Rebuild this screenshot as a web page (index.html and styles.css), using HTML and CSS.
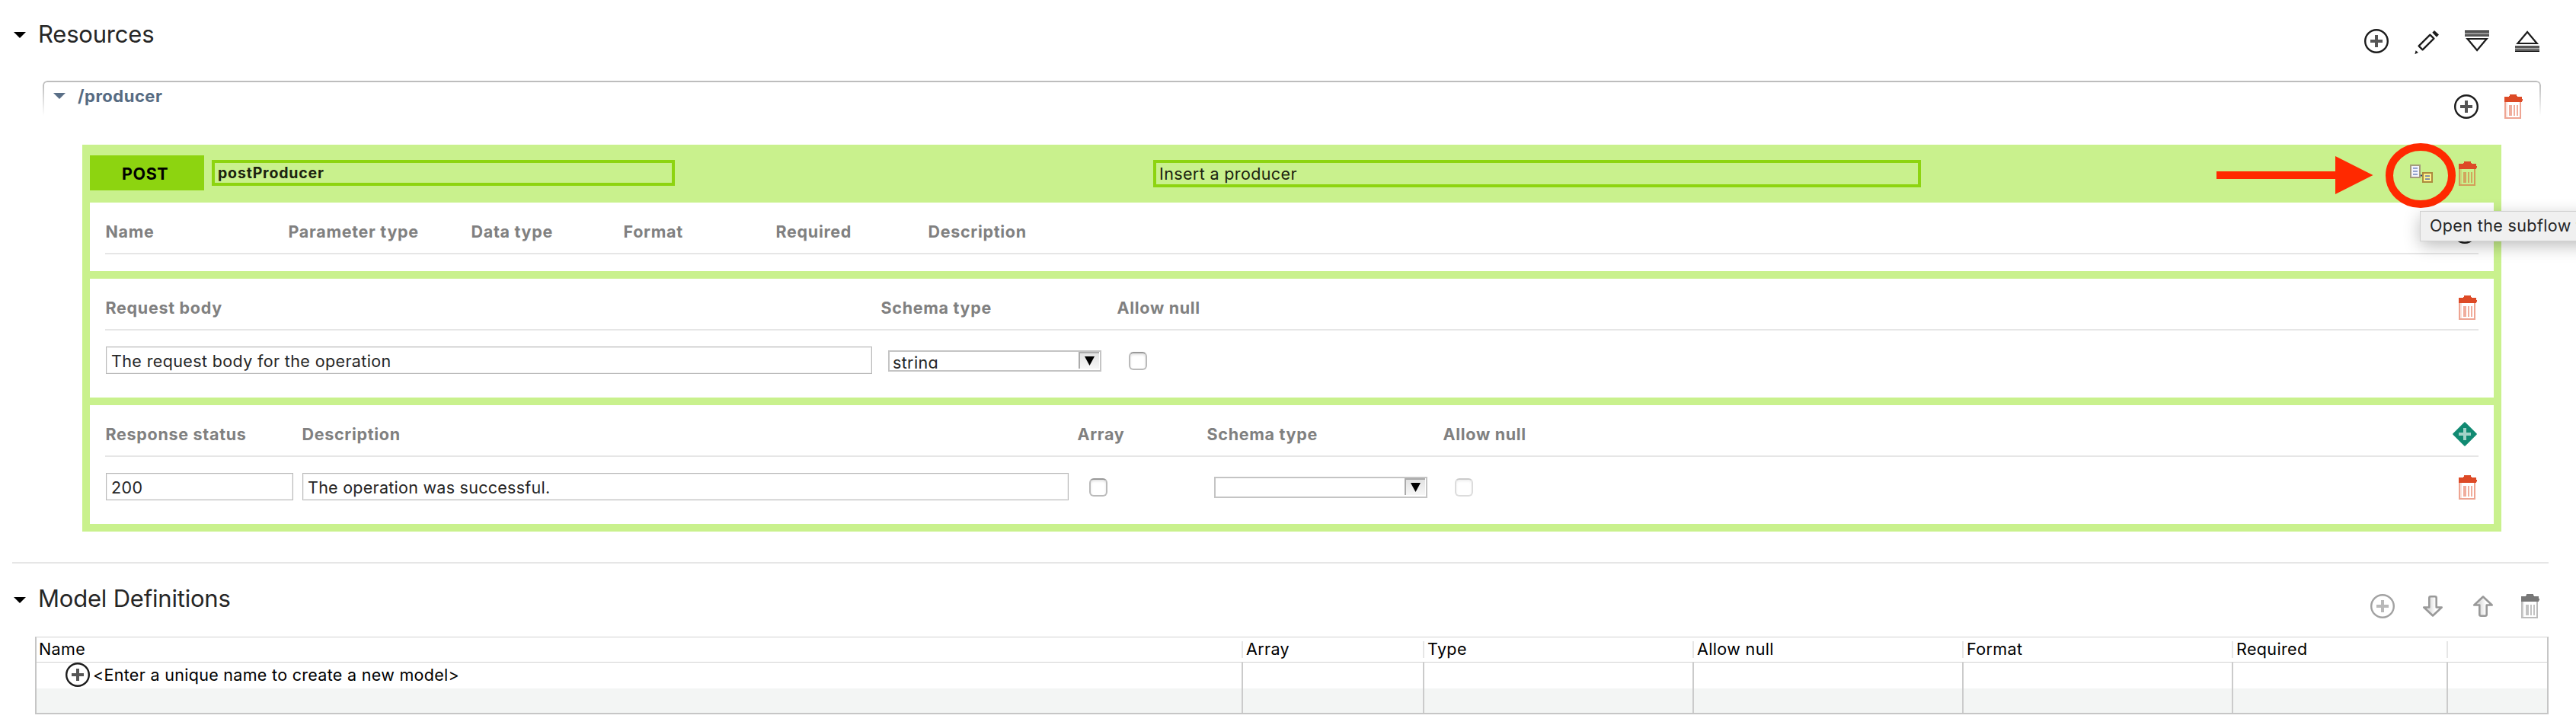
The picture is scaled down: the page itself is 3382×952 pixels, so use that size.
FILE: index.html
```
<!DOCTYPE html>
<html lang="en">
<head>
<meta charset="utf-8">
<title>REST API editor</title>
<link rel="stylesheet" href="styles.css">
</head>
<body>
<svg class="sprite" width="0" height="0" aria-hidden="true">
  <linearGradient id="arrow-fill" x1="0" x2="1"><stop offset="0.35" stop-color="#e2e2e2"/><stop offset="0.65" stop-color="#fff"/></linearGradient>
  <symbol id="i-add" viewBox="0 0 32 32">
    <circle cx="16" cy="16" r="14.8" fill="none" stroke="currentColor" stroke-width="2.4"/>
    <path d="M8 14h6V8h4v6h6v4h-6v6h-4v-6H8z" fill="currentColor" opacity=".75"/>
  </symbol>
  <symbol id="i-pencil" viewBox="0 0 32 32">
    <path d="M5.600 21.400 20.400 6.600l5 5L10.600 26.400z" fill="#fff" stroke="currentColor" stroke-width="2.300" stroke-linejoin="round"/>
    <path d="M23.300 3.800 26 1l6 5.600-3 3.200z M1.600 27.200 5 30 .4 32.200z" fill="currentColor"/>
  </symbol>
  <symbol id="i-expand" viewBox="0 0 32 28">
    <path d="M0 0h32v1.600H0z" fill="#000"/><path d="M0 1.600h32V8H0z" fill="#555"/><path d="M0 3.400h32v1.600H0z" fill="#aaa"/>
    <path d="M3.500 11h25.200L16.100 26z" fill="#fff" stroke="#1c1c1c" stroke-width="2.200"/>
  </symbol>
  <symbol id="i-trash" viewBox="0 0 24 32">
    <path d="M7 0h9v2h1v1h6v3h1v2.500h-1V10H0V3h6V2h1z" fill="currentColor"/>
    <path d="M1 10v21h20V10" fill="none" stroke="currentColor" stroke-width="2" opacity=".5"/>
    <path d="M2 10h2v20H2z" fill="currentColor" opacity=".16"/>
    <path d="M6 14h4v14H6zM12 14h2v14h-2zM16 14h2v14h-2z" fill="currentColor" opacity=".45"/>
  </symbol>
  <symbol id="i-arrow" viewBox="0 0 28 28">
    <path d="M9.300 15.500V3.300q0-2 2-2h5.400q2 0 2 2v12.200h7L14 26.500 2.300 15.500z" fill="url(#arrow-fill)" stroke="#999" stroke-width="2.600" stroke-linejoin="round"/>
  </symbol>
  <symbol id="i-diamond" viewBox="0 0 32 32">
    <path d="M16 1.200 30.800 16 16 30.800 1.200 16z" fill="#118a72" stroke="#118a72" stroke-width="2" stroke-linejoin="round"/>
    <path d="M8 14h6V8h4v6h6v4h-6v6h-4v-6H8z" fill="#a3d2c8"/>
  </symbol>
  <symbol id="i-subflow" viewBox="0 0 30 24">
    <path d="M14 13.500h3v2h-3z" fill="#38466b"/>
    <path d="M1 1h12v16H1z" fill="#f4f4fb" stroke="#a49b7c" stroke-width="2"/>
    <path d="M4 4h6v1.800H4zM4 8h6v1.800H4zM4 12h6v1.800H4z" fill="#8193c6"/>
    <path d="M17 11h12v12H17z" fill="#fbf28c" stroke="#ad8a3e" stroke-width="2"/>
    <path d="M20 14.200h6V16h-6zM20 18.200h6V20h-6z" fill="#6f80a8"/>
  </symbol>
</svg>

<section class="resources">
  <header class="section-head">
    <i class="twistie"></i>
    <h2>Resources</h2>
    <div class="toolbar">
      <svg class="ic"><use href="#i-add"/></svg>
      <svg class="ic pencil"><use href="#i-pencil"/></svg>
      <svg class="ic bars"><use href="#i-expand"/></svg>
      <svg class="ic bars flip"><use href="#i-expand"/></svg>
    </div>
  </header>

  <header class="path-head">
    <i class="twistie slate"></i>
    <h3>/producer</h3>
    <div class="path-tools">
      <svg class="ic"><use href="#i-add"/></svg>
      <svg class="trash"><use href="#i-trash"/></svg>
    </div>
  </header>

  <article class="operation">
    <header class="op-head">
      <span class="verb">POST</span>
      <div class="op-field op-name">postProducer</div>
      <div class="op-field op-summary">Insert a producer</div>
      <svg class="subflow"><use href="#i-subflow"/></svg>
      <svg class="trash"><use href="#i-trash"/></svg>
    </header>

    <section class="block params">
      <div class="labels">
        <span>Name</span><span>Parameter type</span><span>Data type</span><span>Format</span><span>Required</span><span>Description</span>
        <svg class="ic"><use href="#i-add"/></svg>
      </div>
    </section>

    <section class="block request">
      <div class="labels">
        <span>Request body</span><span>Schema type</span><span>Allow null</span>
        <svg class="trash"><use href="#i-trash"/></svg>
      </div>
      <div class="fields">
        <div class="input wide">The request body for the operation</div>
        <div class="select req-type"><span class="value">string</span><span class="drop"></span></div>
        <span class="check"></span>
      </div>
    </section>

    <section class="block response">
      <div class="labels">
        <span>Response status</span><span>Description</span><span>Array</span><span>Schema type</span><span>Allow null</span>
        <svg class="ic"><use href="#i-diamond"/></svg>
      </div>
      <div class="fields">
        <div class="input status">200</div>
        <div class="input wide message">The operation was successful.</div>
        <span class="check array"></span>
        <div class="select res-type"><span class="value"></span><span class="drop"></span></div>
        <span class="check disabled"></span>
        <svg class="trash"><use href="#i-trash"/></svg>
      </div>
    </section>
  </article>
</section>

<section class="models">
  <header class="section-head">
    <i class="twistie"></i>
    <h2>Model Definitions</h2>
    <div class="toolbar">
      <svg class="ic"><use href="#i-add"/></svg>
      <svg class="arrow"><use href="#i-arrow"/></svg>
      <svg class="arrow flip"><use href="#i-arrow"/></svg>
      <svg class="trash"><use href="#i-trash"/></svg>
    </div>
  </header>
  <div class="table">
    <div class="row head"><span>Name</span><span>Array</span><span>Type</span><span>Allow null</span><span>Format</span><span>Required</span><span></span></div>
    <div class="row new"><span class="entry"><svg class="ic"><use href="#i-add"/></svg>&lt;Enter a unique name to create a new model&gt;</span><span></span><span></span><span></span><span></span><span></span><span></span></div>
    <div class="row alt"><span></span><span></span><span></span><span></span><span></span><span></span><span></span></div>
  </div>
</section>

<svg class="callout" viewBox="0 0 320 90">
  <path d="M0 39h156V19l49.500 25L156 69V49H0z" fill="#ff2900"/>
  <ellipse cx="268" cy="44.500" rx="41" ry="37.500" fill="none" stroke="#ff2900" stroke-width="10"/>
</svg>
<div class="tooltip">Open the subflow f</div>
</body>
</html>
```

FILE: styles.css
```
* { box-sizing: border-box; }

body {
  margin: 0;
  width: 3382px;
  height: 952px;
  position: relative;
  overflow: hidden;
  background: #fff;
  color: #262626;
  font: 400 21.5px/30px Inter, "Liberation Sans", sans-serif;
  letter-spacing: 0.37px;
  white-space: nowrap;
}

h2, h3 { margin: 0; }
svg { display: block; flex: none; overflow: visible; }
.sprite { position: absolute; }

.ic { width: 32px; height: 32px; color: #1c1c1c; }
.trash { width: 24px; height: 32px; color: #dd4a26; }
.flip { transform: scaleY(-1); }

.twistie {
  width: 16px;
  height: 8px;
  background: #000;
  clip-path: polygon(0 0, 100% 0, 50% 100%);
}
.twistie.slate { background: #5a6f87; }

/* Section headings */
.section-head { display: flex; align-items: flex-start; padding-left: 18px; }
.section-head h2 {
  margin-left: 16px;
  font-size: 31px;
  font-weight: 400;
  line-height: 40px;
  letter-spacing: -0.2px;
}
.toolbar { display: flex; margin-left: auto; }

.resources .section-head { height: 106px; padding-top: 25px; }
.resources .section-head .twistie { margin-top: 17px; }
.resources .toolbar { gap: 34px; padding: 13px 48px 0 0; }
.pencil { margin-top: 1px; }
.bars { height: 28px; margin-top: 2px; }

/* Resource path */
.path-head {
  position: relative;
  display: flex;
  align-items: flex-start;
  height: 84px;
  margin: 0 46px 0 56px;
}
.path-head::before {
  content: "";
  position: absolute;
  inset: 0 0 auto 0;
  height: 44px;
  border: 2px solid #bdbdbd;
  border-bottom: 0;
  border-radius: 6px 6px 0 0;
  -webkit-mask-image: linear-gradient(#000 10%, transparent);
  mask-image: linear-gradient(#000 10%, transparent);
}
.path-head .twistie { margin: 16px 0 0 14px; }
.path-head h3 {
  margin: 5px 0 0 16px;
  color: #566b82;
  font-size: 22px;
  font-weight: 700;
  letter-spacing: 0.5px;
}
.path-tools { display: flex; gap: 34px; margin: 18px 24px 0 auto; }

/* Operation panel */
.operation {
  width: 3176px;
  height: 508px;
  margin-left: 108px;
  padding: 0 10px 10px;
  background: #c9f18d;
}
.op-head { display: flex; align-items: flex-start; height: 76px; padding-top: 14px; }
.verb {
  width: 150px;
  height: 46px;
  padding-left: 42px;
  background: #8dd410;
  color: #000;
  font-weight: 700;
  line-height: 48px;
  letter-spacing: 0.6px;
}
.op-field { margin-top: 6px; padding-left: 4px; border: 4px solid #8dd410; color: #1c230f; }
.op-name {
  width: 608px;
  height: 34px;
  margin-left: 10px;
  font-size: 19.5px;
  font-weight: 700;
  line-height: 26px;
  letter-spacing: 0.82px;
}
.op-summary { width: 1008px; height: 36px; margin-left: 628px; line-height: 28px; }
.subflow { width: 30px; height: 24px; margin: 12px 0 0 642px; }
.op-head .trash { margin: 8px 0 0 34px; }

.block { padding: 0 20px; background: #fff; }
.params { height: 90px; }
.request, .response { height: 156px; margin-top: 10px; }

.labels {
  display: flex;
  height: 68px;
  padding-top: 23px;
  border-bottom: 2px solid #e6e6e6;
  color: #808080;
  font-weight: 700;
  letter-spacing: 0.7px;
}
.labels span { flex: none; text-indent: 0.5px; }
.labels svg { margin: -1px 2px 0 auto; }

.params span { width: 240px; }
.params span:nth-child(3), .params span:nth-child(4), .params span:nth-child(5) { width: 200px; }
.request .labels span:nth-child(1) { width: 1018px; }
.request .labels span:nth-child(2) { width: 310px; }
.response .labels span:nth-child(1) { width: 258px; }
.response .labels span:nth-child(2) { width: 1018px; }
.response .labels span:nth-child(3) { width: 170px; }
.response .labels span:nth-child(4) { width: 310px; }

.fields { display: flex; align-items: flex-start; padding: 21px 2px 0 1px; }
.input {
  height: 36px;
  padding-left: 6px;
  border: 1px solid #b9b9b9;
  box-shadow: inset 0 0 0 1px #f0f0f0;
  line-height: 36px;
}
.wide { width: 1006px; }
.message { letter-spacing: 0.26px; }
.status { width: 246px; margin-right: 12px; }

.select {
  display: flex;
  width: 280px;
  height: 28px;
  margin-top: 5px;
  padding: 0 1px 2px 4px;
  border: 2px solid #c4c4c4;
}
.select .value { flex: 1; overflow: hidden; line-height: 28px; }
.drop {
  display: flex;
  justify-content: center;
  width: 27px;
  padding-top: 4px;
  border: solid #ababab;
  border-width: 2px 0 0 2px;
  background: linear-gradient(#e2e2e2, #f7f7f7);
}
.drop::before {
  content: "";
  width: 13px;
  height: 12px;
  background: #000;
  clip-path: polygon(0 0, 100% 0, 50% 100%);
}
.req-type { margin-left: 21px; }
.res-type { margin-left: 140px; }

.check {
  width: 24px;
  height: 24px;
  margin: 7px 0 0 36px;
  border: 2px solid #bababa;
  border-top-color: #989898;
  border-radius: 6px;
  box-shadow: inset 0 2px 3px #e2e2e2;
}
.check.array { margin-left: 27px; }
.check.disabled { opacity: 0.5; }
.fields .trash { margin: 3px 0 0 auto; }

/* Model definitions */
.models { margin-top: 40px; }
.models::before {
  content: "";
  display: block;
  width: 3330px;
  height: 2px;
  margin-left: 16px;
  background: #e6e6e6;
}
.models .section-head { height: 96px; padding-top: 26px; }
.models .section-head .twistie { margin-top: 18px; }
.models .toolbar { padding: 14px 48px 0 0; }
.models .toolbar .ic { color: #a2a2a2; }
.models .toolbar .trash { margin-left: 36px; color: #777; }
.arrow { width: 28px; height: 28px; margin: 2px 0 0 36px; }
.arrow + .arrow { margin-left: 38px; }

.table {
  width: 3300px;
  height: 102px;
  margin-left: 46px;
  border: 2px solid #c6c6c6;
  border-top: 1px solid #d2d2d2;
  color: #000;
}
.row { display: grid; grid-template-columns: 1582px 238px 354px 354px 354px 282px 132px; }
.row span { padding-left: 4px; border-left: 2px solid #cbcbcb; }
.row span:first-child { padding-left: 3px; border: 0; }
.head { height: 33px; padding-top: 5px; border-bottom: 1px solid #d2d2d2; }
.head span { height: 22px; border-color: #e6e6e6; line-height: 20px; }
.new { height: 34px; line-height: 32px; }
.row .entry:first-child { display: flex; padding-left: 38px; letter-spacing: 0.3px; }
.entry .ic { margin-right: 4px; }
.alt { height: 32px; background: #f3f5f4; }

/* Arrow and ring drawn over the subflow button */
.callout { position: absolute; left: 2910px; top: 186px; width: 320px; height: 90px; }

.tooltip {
  position: absolute;
  left: 3178px;
  top: 278px;
  width: 240px;
  height: 38px;
  padding-left: 12px;
  background: #f0f0f0;
  box-shadow: 0 0 0 1px #d0d0d0, 0 6px 22px rgba(0, 0, 0, 0.28);
  line-height: 37px;
}
```
